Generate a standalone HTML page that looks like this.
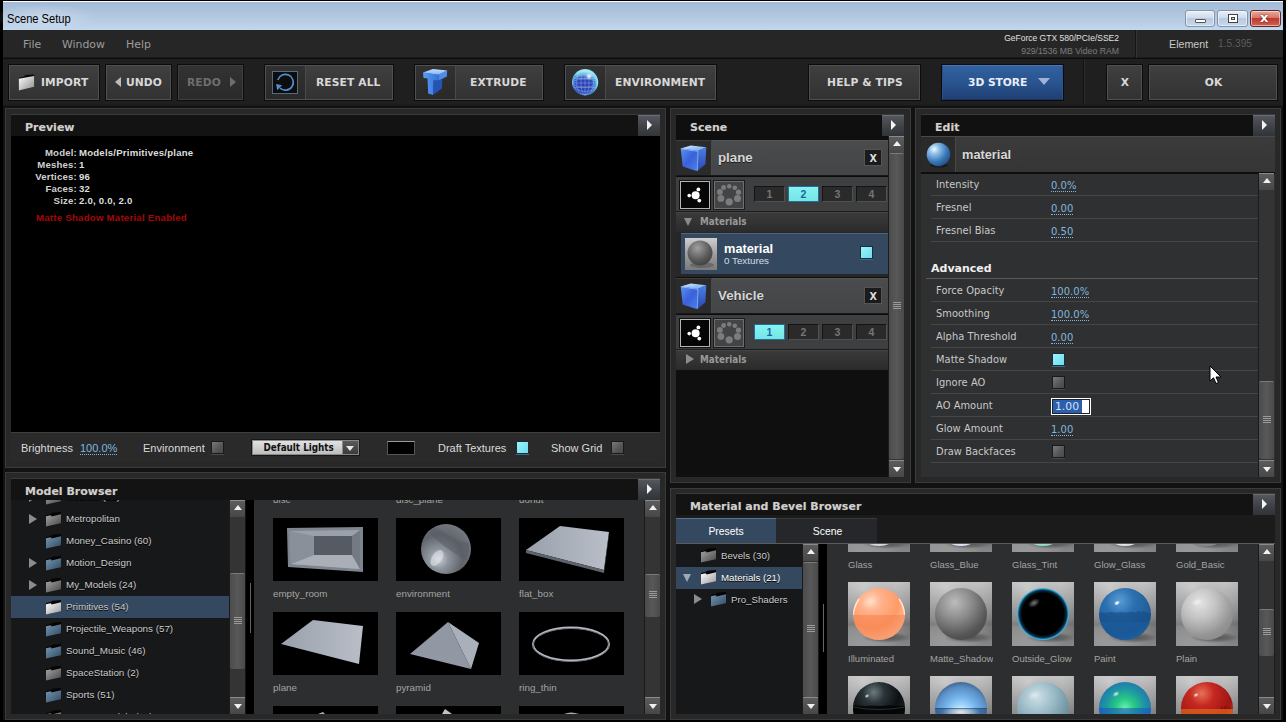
<!DOCTYPE html>
<html lang="en">
<head>
<meta charset="utf-8">
<title>Scene Setup</title>
<style>
*{box-sizing:border-box;margin:0;padding:0}
html,body{width:1286px;height:722px;overflow:hidden;background:#000}
body{position:relative;font-family:"Liberation Sans","DejaVu Sans",sans-serif;font-size:11px;color:#c4c4c4}
div,span,svg{position:absolute}
.dv{font-family:"DejaVu Sans","Liberation Sans",sans-serif}
.dc{font-family:"DejaVu Sans Condensed","DejaVu Sans","Liberation Sans",sans-serif}
.nw{white-space:nowrap}
#main{left:3px;top:1px;width:1280px;height:719px;background:#121212}
#title{left:3px;top:1px;width:1280px;height:29px;border-top:1px solid #fbfdff;background:linear-gradient(#a3bbd7,#b1c7e0 50%,#c3d7ed)}
#title .t{left:4px;top:9px;font-size:13px;color:#000;transform-origin:0 0;transform:scaleX(.855)}
.wb{top:10px;height:17px;border:1px solid #8494ab;border-radius:3px;background:linear-gradient(#e8eff8,#cfdced 45%,#b9cbe2 50%,#c9d8ea);box-shadow:0 0 0 1px rgba(255,255,255,.5) inset}
#menu{left:3px;top:30px;width:1280px;height:28px;background:#262626;border-bottom:1px solid #1a1a1a}
#menu span{top:8px;font-size:10.9px;color:#9c9c9c}
#tool{left:3px;top:58px;width:1280px;height:48px;background:#1f1f1f;border-top:1px solid #0d0d0d;border-bottom:1px solid #191919}
.btn{top:65px;height:35px;border:1px solid #505050;background:linear-gradient(#3f3f3f,#323232);box-shadow:0 0 0 1px #0c0c0c}
.btn .ic{left:0;top:0;bottom:0;width:40px;background:linear-gradient(#313131,#292929);border-right:1px solid #4a4a4a}
.btn .lb{top:0;height:33px;line-height:33px;font-family:"DejaVu Sans",sans-serif;font-weight:bold;font-size:10.7px;color:#d8d8d8;letter-spacing:.12px;white-space:nowrap}
.panel{background:#282828;border:1px solid #3b3b3b}
.inner{background:#131313;border-top:1px solid #393939;overflow:hidden}
.ph{font-family:"DejaVu Sans",sans-serif;font-weight:bold;font-size:11px;color:#cfcfcf;white-space:nowrap;text-shadow:0 0 1px rgba(230,200,150,.35)}
.ab{width:22px;background:linear-gradient(#53575d,#3c3f44 60%,#303338);border-top:1px solid #6a6e74}
.ab:after{content:"";position:absolute;left:9px;top:4px;border-left:5px solid #f4f4f4;border-top:5px solid transparent;border-bottom:5px solid transparent}
.sb{background:#343434;width:16px;border-left:1px solid #1b1b1b}
.sbb{left:0;width:15px;height:17px;background:linear-gradient(#5c5c5c,#474747);border-top:1px solid #8a8a8a}
.sbb.up:after{content:"";position:absolute;left:3.500px;top:4px;border-bottom:5px solid #f0f0f0;border-left:4px solid transparent;border-right:4px solid transparent}
.sbb.dn:after{content:"";position:absolute;left:3.500px;top:6px;border-top:5px solid #f0f0f0;border-left:4px solid transparent;border-right:4px solid transparent}
.sbt{left:0;width:15px;background:linear-gradient(90deg,#4c4c4c,#585858 50%,#4a4a4a);border-top:1px solid #7a7a7a;border-radius:2px}
.grip{left:3.500px;width:8px;height:7px;background:repeating-linear-gradient(#9a9a9a 0 1px,transparent 1px 2px)}
.cb{width:13px;height:13px;border:1px solid #1a1a1a;background:linear-gradient(135deg,#7a7a7a,#555 60%,#4a4a4a);box-shadow:0 1px 0 #4a4a4a}
.cb.on{background:linear-gradient(135deg,#9af4fb,#6fdcec);border-color:#1c2c3a;box-shadow:0 1px 0 #3a6a8a}
.tl{font-size:9.8px;color:#cbcbcb;white-space:nowrap;text-shadow:0 1px 0 #000}
.tri-r{width:0;height:0;border-left:8px solid #8c8c8c;border-top:5px solid transparent;border-bottom:5px solid transparent}
.tri-d{width:0;height:0;border-top:8px solid #8c8c8c;border-left:4.500px solid transparent;border-right:4.500px solid transparent}
.val{font-family:"DejaVu Sans",sans-serif;font-size:10px;color:#82b6dc;white-space:nowrap;border-bottom:1px dotted #82b6dc;line-height:11px;height:12px}
.el{font-family:"DejaVu Sans",sans-serif;font-size:9.9px;color:#c9c9c9;white-space:nowrap;letter-spacing:.05px}
.es{height:1px;background:#454545}
.glab{font-size:9.8px;color:#a4a4a4;white-space:nowrap}
.mlab{font-size:9.5px;width:63px;overflow:hidden}
.nb{width:31px;height:16px;top:10px;background:#2a2a2a;border:1px solid #141414;border-right-color:#505050;border-bottom-color:#505050;font-size:10.5px;font-weight:bold;color:#767676;text-align:center;line-height:14px}
.nb.on{background:linear-gradient(#86f4f0,#74e6e6);color:#1a64a2;border-color:#2a6a9a;font-weight:bold}
</style>
</head>
<body>
<div id="main"></div>
<div id="title"><div style="left:-14px;top:2px;width:110px;height:26px;background:radial-gradient(ellipse at center,rgba(255,255,255,.3),rgba(255,255,255,0) 70%)"></div><span class="t nw">Scene Setup</span></div>
<div class="wb" style="left:1185px;width:30px"><div style="left:9px;top:8px;width:11px;height:4px;background:#fff;border:1px solid #555;border-radius:1px"></div></div>
<div class="wb" style="left:1217px;width:31px"><div style="left:10px;top:3px;width:10px;height:9px;border:1px solid #444;background:#fff"></div><div style="left:13px;top:6px;width:4px;height:3px;border:1px solid #444;background:#c9d8ea"></div></div>
<div class="wb" style="left:1250px;width:31px;border-color:#5a2a2a;background:linear-gradient(#e9a99d,#d6766a 45%,#c2392b 50%,#d0624f)"><span class="dv" style="left:9px;top:-1px;font-weight:bold;font-size:13px;color:#fff;text-shadow:0 0 2px #400">x</span></div>
<div id="menu"><span class="dv" style="left:20px">File</span><span class="dv" style="left:59px">Window</span><span class="dv" style="left:123px">Help</span></div>
<span class="nw" style="right:167px;top:33px;font-size:8.5px;color:#e0e0e0">GeForce GTX 580/PCIe/SSE2</span>
<span class="nw" style="right:167px;top:46px;font-size:8.7px;color:#7d7d7d">929/1536 MB Video RAM</span>
<div style="left:1135px;top:30px;width:1px;height:28px;background:#151515"></div><div style="left:1136px;top:30px;width:1px;height:28px;background:#343434"></div>
<span class="nw" style="left:1169px;top:38px;font-size:10.7px;color:#c8c8c8">Element</span>
<span class="nw" style="left:1218px;top:38px;font-size:10.2px;color:#5c5c5c">1.5.395</span>
<div id="tool"></div>
<div style="left:1083px;top:59px;width:1px;height:46px;background:#111"></div><div style="left:1084px;top:59px;width:1px;height:46px;background:#2c2c2c"></div>

<div class="btn" style="left:9px;width:90px">
<svg style="left:8px;top:8px" width="17" height="17" viewBox="0 0 20 18" preserveAspectRatio="none"><defs><linearGradient id="imp" x1="0" y1="0" x2="1" y2="1"><stop offset="0" stop-color="#fff"/><stop offset="1" stop-color="#8d8d8d"/></linearGradient></defs><path d="M1 4 L7 3 L8.5 1 L19 0.5 L19 13 L1 17.5 Z" fill="#0a0a0a"/><path d="M1 5 L19 2.2 L19 13.5 L1 17.5 Z" fill="url(#imp)"/></svg>
<span class="lb" style="left:31px">IMPORT</span></div>
<div class="btn" style="left:106px;width:65px"><div style="left:8px;top:11px;border-right:6px solid #bbb;border-top:5px solid transparent;border-bottom:5px solid transparent"></div><span class="lb" style="left:19px">UNDO</span></div>
<div class="btn" style="left:178px;width:65px;border-color:#3f3f3f;background:linear-gradient(#323232,#2a2a2a)"><span class="lb" style="left:8px;color:#6e6e6e">REDO</span><div style="left:51px;top:11px;border-left:6px solid #6e6e6e;border-top:5px solid transparent;border-bottom:5px solid transparent"></div></div>
<div class="btn" style="left:265px;width:128px"><div class="ic"><div style="left:6px;top:5px;width:26px;height:23px;background:#0d0d0d;border:1px solid #566a80"></div>
<svg style="left:6px;top:5px" width="26" height="23" viewBox="0 0 26 23"><path d="M5.800 9.100 A7.900 7.900 0 1 1 8 17" fill="none" stroke="#4f8fcf" stroke-width="1.700"/><path d="M4.100 13.100 L10.100 14.200 L5.200 19.300 Z" fill="#4f8fcf"/></svg></div>
<span class="lb" style="left:50px">RESET ALL</span></div>
<div class="btn" style="left:415px;width:128px"><div class="ic">
<svg style="left:6px;top:1px" width="28" height="32" viewBox="0 0 28 32"><defs><linearGradient id="ex1" x1="0" y1="0" x2="1" y2="0"><stop offset="0" stop-color="#5a9cf4"/><stop offset="1" stop-color="#3573dc"/></linearGradient><linearGradient id="ex2" x1="0" y1="0" x2="0" y2="1"><stop offset="0" stop-color="#c4e0ff"/><stop offset="1" stop-color="#7cb6f8"/></linearGradient></defs>
<path d="M11.500 13.500 L16.400 13.500 L24.900 9.500 L20.400 12 L19.900 21.400 L11 28 Z" fill="#2453b4"/><path d="M16.400 7.700 L25.200 3.500 L24.900 9.500 L16.400 13.500 Z" fill="#4d8cec"/><path d="M1 5.500 L16.400 7.700 L16.400 13.500 L11.500 13.500 L11 28 L6.200 26.400 L5.500 11.500 L1.500 11 Z" fill="url(#ex1)"/><path d="M1 5.500 L11 2 L25.200 3.500 L16.400 7.700 Z" fill="url(#ex2)"/></svg></div>
<span class="lb" style="left:54px">EXTRUDE</span></div>
<div class="btn" style="left:565px;width:151px"><div class="ic">
<svg style="left:6px;top:3px" width="28" height="28" viewBox="0 0 28 28"><defs><radialGradient id="gl" cx=".45" cy=".6" r=".56"><stop offset="0" stop-color="#2a3cb4"/><stop offset=".55" stop-color="#2846b8"/><stop offset=".78" stop-color="#3f8ad4"/><stop offset=".92" stop-color="#74d2ea"/><stop offset="1" stop-color="#8adcee"/></radialGradient><radialGradient id="gl2" cx=".5" cy=".5" r=".5"><stop offset="0" stop-color="#fff"/><stop offset="1" stop-color="#fff" stop-opacity="0"/></radialGradient><linearGradient id="gl3" x1="0" y1="0" x2="0" y2="1"><stop offset="0" stop-color="#b8f0f8" stop-opacity=".85"/><stop offset="1" stop-color="#7fd8ee" stop-opacity="0"/></linearGradient></defs><circle cx="13.100" cy="13.200" r="13.100" fill="url(#gl)"/><g fill="none" stroke="#cfe6ff" stroke-width=".6" opacity=".55"><ellipse cx="13" cy="14" rx="12.500" ry="4"/><ellipse cx="13" cy="14" rx="12.800" ry="8.500"/><ellipse cx="13" cy="13.500" rx="4" ry="12.500"/><ellipse cx="13" cy="13.500" rx="8.500" ry="12.800"/><path d="M.5 14H25.700M13 1V26M2 9.500H24M2 18.500H24"/></g><ellipse cx="13" cy="6" rx="9.500" ry="5" fill="url(#gl3)"/><circle cx="17" cy="7.300" r="3.600" fill="url(#gl2)"/></svg></div>
<span class="lb" style="left:49px">ENVIRONMENT</span></div>
<div class="btn" style="left:809px;width:111px"><span class="lb" style="left:0;width:110px;text-align:center">HELP &amp; TIPS</span></div>
<div class="btn" style="left:942px;width:121px;top:65px;height:35px;border-color:#4a76b4 #2a5192 #1a3460 #2a5192;background:linear-gradient(#31619f,#29548f 50%,#1f4074)"><span class="lb" style="left:25px;top:0;color:#e9eef6;letter-spacing:-.05px">3D STORE</span><div style="left:95px;top:12px;border-top:7px solid #9fb4d4;border-left:6px solid transparent;border-right:6px solid transparent"></div></div>
<div class="btn" style="left:1107px;width:35px"><span class="lb" style="left:0;width:34px;text-align:center">X</span></div>
<div class="btn" style="left:1149px;width:128px"><span class="lb" style="left:0;width:127px;text-align:center">OK</span></div>

<div class="panel" style="left:5px;top:108px;width:661px;height:360px"></div>
<div class="inner" style="left:11px;top:114px;width:649px;height:348px">
 <span class="ph" style="left:14px;top:6px">Preview</span>
 <div class="ab" style="left:627px;top:0;height:22px"></div>
 <div style="left:0;top:21px;width:649px;height:296px;background:#000"></div>
 <div style="left:0;top:317px;width:649px;height:31px;background:#2a2a2a;border-top:1px solid #3e3e3e"></div>
</div>

<span class="nw" style="right:1209px;top:147px;font-weight:bold;font-size:9.6px;color:#d0d0d0;letter-spacing:.2px">Model:</span><span class="nw" style="left:79px;top:147px;font-weight:bold;font-size:9.6px;color:#dedede;letter-spacing:.22px">Models/Primitives/plane</span>
<span class="nw" style="right:1209px;top:159px;font-weight:bold;font-size:9.6px;color:#d0d0d0;letter-spacing:.2px">Meshes:</span><span class="nw" style="left:79px;top:159px;font-weight:bold;font-size:9.6px;color:#dedede;letter-spacing:.22px">1</span>
<span class="nw" style="right:1209px;top:171px;font-weight:bold;font-size:9.6px;color:#d0d0d0;letter-spacing:.2px">Vertices:</span><span class="nw" style="left:79px;top:171px;font-weight:bold;font-size:9.6px;color:#dedede;letter-spacing:.22px">96</span>
<span class="nw" style="right:1209px;top:183px;font-weight:bold;font-size:9.6px;color:#d0d0d0;letter-spacing:.2px">Faces:</span><span class="nw" style="left:79px;top:183px;font-weight:bold;font-size:9.6px;color:#dedede;letter-spacing:.22px">32</span>
<span class="nw" style="right:1209px;top:195px;font-weight:bold;font-size:9.6px;color:#d0d0d0;letter-spacing:.2px">Size:</span><span class="nw" style="left:79px;top:195px;font-weight:bold;font-size:9.6px;color:#dedede;letter-spacing:.22px">2.0, 0.0, 2.0</span>
<span class="nw" style="left:36px;top:212px;font-weight:bold;font-size:9.6px;color:#a80606;letter-spacing:.26px">Matte Shadow Material Enabled</span>
<span class="nw" style="left:21px;top:442px;font-size:11px;color:#dadada">Brightness</span>
<span class="nw" style="left:80px;top:443px;font-size:11px;color:#7db6e0;border-bottom:1px dotted #7db6e0;line-height:11px;height:12px">100.0%</span>
<span class="nw" style="left:143px;top:442px;font-size:11px;color:#dadada">Environment</span>
<div class="cb" style="left:211px;top:441px"></div>
<div style="left:252px;top:440px;width:107px;height:15px;background:linear-gradient(#e2e2e2,#bdbdbd);border:1px solid #8a8a8a;border-right:0;box-shadow:0 0 0 1px #171717"></div>
<span class="dc nw" style="left:263.500px;top:441.500px;font-weight:bold;font-size:9.8px;color:#111">Default Lights</span>
<div style="left:342px;top:440px;width:17px;height:15px;background:linear-gradient(#5a5a5a,#3b3b3b);border:1px solid #888"></div>
<div style="left:346px;top:446px;border-top:5px solid #e8e8e8;border-left:4px solid transparent;border-right:4px solid transparent"></div>
<div style="left:387px;top:441px;width:28px;height:14px;background:#000;border:1px solid #555;border-top-color:#999"></div>
<span class="nw" style="left:438px;top:442px;font-size:11px;color:#dadada">Draft Textures</span>
<div class="cb on" style="left:516px;top:441px"></div>
<span class="nw" style="left:551px;top:442px;font-size:11px;color:#dadada">Show Grid</span>
<div class="cb" style="left:611px;top:441px"></div>

<div class="panel" style="left:5px;top:472px;width:661px;height:248px"></div>
<div class="inner" style="left:11px;top:478px;width:649px;height:236px">
 <span class="ph" style="left:14px;top:6px">Model Browser</span>
 <div class="ab" style="left:627px;top:0;height:21px"></div>
 <div style="left:0;top:21px;width:219px;height:215px;background:#17181a"></div>
 <div style="left:235px;top:21px;width:8px;height:215px;background:#000"></div>
 <div style="left:239px;top:104px;width:1px;height:50px;background:#666"></div>
 <div style="left:243px;top:21px;width:390px;height:215px;background:#2d2e2f"></div>
</div>

<div style="left:11px;top:500px;width:219px;height:214px;overflow:hidden">
<div class="tri-r" style="left:18px;top:-8px"></div>
<svg style="left:34px;top:-10px" width="17" height="15" viewBox="0 0 17 15"><defs><linearGradient id="fgm0" x1="0" y1="0" x2="1" y2="1"><stop offset="0" stop-color="#a4a4a4"/><stop offset="1" stop-color="#464646"/></linearGradient></defs><path d="M1 3 L6 1.800 L7 0.700 L16 0 L16 11 L1 14.500 Z" fill="#050505"/><path d="M1 4.300 L5.600 3.300 L6.800 4.500 L16 2.200 L16 11.200 L1 14.500 Z" fill="url(#fgm0)"/></svg>
<span class="tl" style="left:55px;top:-9px">Medical (12)</span>
<div class="tri-r" style="left:18px;top:14px"></div>
<svg style="left:34px;top:12px" width="17" height="15" viewBox="0 0 17 15"><defs><linearGradient id="fgm1" x1="0" y1="0" x2="1" y2="1"><stop offset="0" stop-color="#a4a4a4"/><stop offset="1" stop-color="#464646"/></linearGradient></defs><path d="M1 3 L6 1.800 L7 0.700 L16 0 L16 11 L1 14.500 Z" fill="#050505"/><path d="M1 4.300 L5.600 3.300 L6.800 4.500 L16 2.200 L16 11.200 L1 14.500 Z" fill="url(#fgm1)"/></svg>
<span class="tl" style="left:55px;top:13px">Metropolitan</span>
<svg style="left:34px;top:34px" width="17" height="15" viewBox="0 0 17 15"><defs><linearGradient id="fgm2" x1="0" y1="0" x2="1" y2="1"><stop offset="0" stop-color="#7796b0"/><stop offset="1" stop-color="#2f4a63"/></linearGradient></defs><path d="M1 3 L6 1.800 L7 0.700 L16 0 L16 11 L1 14.500 Z" fill="#050505"/><path d="M1 4.300 L5.600 3.300 L6.800 4.500 L16 2.200 L16 11.200 L1 14.500 Z" fill="url(#fgm2)"/></svg>
<span class="tl" style="left:55px;top:35px">Money_Casino (60)</span>
<div class="tri-r" style="left:18px;top:58px"></div>
<svg style="left:34px;top:56px" width="17" height="15" viewBox="0 0 17 15"><defs><linearGradient id="fgm3" x1="0" y1="0" x2="1" y2="1"><stop offset="0" stop-color="#7796b0"/><stop offset="1" stop-color="#2f4a63"/></linearGradient></defs><path d="M1 3 L6 1.800 L7 0.700 L16 0 L16 11 L1 14.500 Z" fill="#050505"/><path d="M1 4.300 L5.600 3.300 L6.800 4.500 L16 2.200 L16 11.200 L1 14.500 Z" fill="url(#fgm3)"/></svg>
<span class="tl" style="left:55px;top:57px">Motion_Design</span>
<div class="tri-r" style="left:18px;top:80px"></div>
<svg style="left:34px;top:78px" width="17" height="15" viewBox="0 0 17 15"><defs><linearGradient id="fgm4" x1="0" y1="0" x2="1" y2="1"><stop offset="0" stop-color="#a4a4a4"/><stop offset="1" stop-color="#464646"/></linearGradient></defs><path d="M1 3 L6 1.800 L7 0.700 L16 0 L16 11 L1 14.500 Z" fill="#050505"/><path d="M1 4.300 L5.600 3.300 L6.800 4.500 L16 2.200 L16 11.200 L1 14.500 Z" fill="url(#fgm4)"/></svg>
<span class="tl" style="left:55px;top:79px">My_Models (24)</span>
<div style="left:0;top:96px;width:219px;height:22px;background:#34495f"></div>
<svg style="left:34px;top:100px" width="17" height="15" viewBox="0 0 17 15"><defs><linearGradient id="fgm5" x1="0" y1="0" x2="1" y2="1"><stop offset="0" stop-color="#ffffff"/><stop offset="1" stop-color="#9a9a9a"/></linearGradient></defs><path d="M1 3 L6 1.800 L7 0.700 L16 0 L16 11 L1 14.500 Z" fill="#050505"/><path d="M1 4.300 L5.600 3.300 L6.800 4.500 L16 2.200 L16 11.200 L1 14.500 Z" fill="url(#fgm5)"/></svg>
<span class="tl" style="left:55px;top:101px">Primitives (54)</span>
<svg style="left:34px;top:122px" width="17" height="15" viewBox="0 0 17 15"><defs><linearGradient id="fgm6" x1="0" y1="0" x2="1" y2="1"><stop offset="0" stop-color="#7796b0"/><stop offset="1" stop-color="#2f4a63"/></linearGradient></defs><path d="M1 3 L6 1.800 L7 0.700 L16 0 L16 11 L1 14.500 Z" fill="#050505"/><path d="M1 4.300 L5.600 3.300 L6.800 4.500 L16 2.200 L16 11.200 L1 14.500 Z" fill="url(#fgm6)"/></svg>
<span class="tl" style="left:55px;top:123px">Projectile_Weapons (57)</span>
<svg style="left:34px;top:144px" width="17" height="15" viewBox="0 0 17 15"><defs><linearGradient id="fgm7" x1="0" y1="0" x2="1" y2="1"><stop offset="0" stop-color="#7796b0"/><stop offset="1" stop-color="#2f4a63"/></linearGradient></defs><path d="M1 3 L6 1.800 L7 0.700 L16 0 L16 11 L1 14.500 Z" fill="#050505"/><path d="M1 4.300 L5.600 3.300 L6.800 4.500 L16 2.200 L16 11.200 L1 14.500 Z" fill="url(#fgm7)"/></svg>
<span class="tl" style="left:55px;top:145px">Sound_Music (46)</span>
<svg style="left:34px;top:166px" width="17" height="15" viewBox="0 0 17 15"><defs><linearGradient id="fgm8" x1="0" y1="0" x2="1" y2="1"><stop offset="0" stop-color="#a4a4a4"/><stop offset="1" stop-color="#464646"/></linearGradient></defs><path d="M1 3 L6 1.800 L7 0.700 L16 0 L16 11 L1 14.500 Z" fill="#050505"/><path d="M1 4.300 L5.600 3.300 L6.800 4.500 L16 2.200 L16 11.200 L1 14.500 Z" fill="url(#fgm8)"/></svg>
<span class="tl" style="left:55px;top:167px">SpaceStation (2)</span>
<svg style="left:34px;top:188px" width="17" height="15" viewBox="0 0 17 15"><defs><linearGradient id="fgm9" x1="0" y1="0" x2="1" y2="1"><stop offset="0" stop-color="#7796b0"/><stop offset="1" stop-color="#2f4a63"/></linearGradient></defs><path d="M1 3 L6 1.800 L7 0.700 L16 0 L16 11 L1 14.500 Z" fill="#050505"/><path d="M1 4.300 L5.600 3.300 L6.800 4.500 L16 2.200 L16 11.200 L1 14.500 Z" fill="url(#fgm9)"/></svg>
<span class="tl" style="left:55px;top:189px">Sports (51)</span>
<svg style="left:34px;top:210px" width="17" height="15" viewBox="0 0 17 15"><defs><linearGradient id="fgm10" x1="0" y1="0" x2="1" y2="1"><stop offset="0" stop-color="#a4a4a4"/><stop offset="1" stop-color="#464646"/></linearGradient></defs><path d="M1 3 L6 1.800 L7 0.700 L16 0 L16 11 L1 14.500 Z" fill="#050505"/><path d="M1 4.300 L5.600 3.300 L6.800 4.500 L16 2.200 L16 11.200 L1 14.500 Z" fill="url(#fgm10)"/></svg>
<span class="tl" style="left:55px;top:211px">Starter_Models (24)</span>
</div>
<div class="sb" style="left:229px;top:500px;height:214px"><div class="sbb up" style="top:0"></div><div class="sbt" style="top:73px;height:96px"></div><div class="grip" style="top:117px"></div><div class="sbb dn" style="top:197px"></div></div>
<div class="sb" style="left:644px;top:500px;height:214px"><div class="sbb up" style="top:0"></div><div class="sbt" style="top:74px;height:43px"></div><div class="grip" style="top:91px"></div><div class="sbb dn" style="top:197px"></div></div>
<div style="left:254px;top:500px;width:390px;height:214px;overflow:hidden">
<svg width="0" height="0"><defs>
<linearGradient id="mg1" x1="0" y1="0" x2="1" y2="1"><stop offset="0" stop-color="#aeb4bd"/><stop offset="1" stop-color="#8f96a1"/></linearGradient>
<linearGradient id="mg2" x1="0" y1="0" x2="1" y2="0"><stop offset="0" stop-color="#9aa1ac"/><stop offset="1" stop-color="#b9bec7"/></linearGradient>
<radialGradient id="msp" cx=".35" cy=".7" r=".8"><stop offset="0" stop-color="#d0d4da"/><stop offset=".25" stop-color="#8e949c"/><stop offset=".6" stop-color="#5f646b"/><stop offset="1" stop-color="#787d85"/></radialGradient>
</defs></svg>
<span class="glab" style="left:19px;top:-6px">disc</span>
<span class="glab" style="left:142px;top:-6px">disc_plane</span>
<span class="glab" style="left:265px;top:-6px">donut</span>
<svg style="left:19px;top:18px" width="105" height="63" viewBox="0 0 105 63"><rect width="105" height="63" fill="#000"/><path d="M14 10 L90 9 L90 54 L15 49 Z" fill="#7f858e"/><path d="M17 13 L87 12 L87 51 L18 46 Z" fill="#9ba1ab"/><path d="M41 18 L79 18 L79 37 L41 37 Z" fill="#565b63"/><path d="M18 46 L41 37 L79 37 L87 51 Z" fill="#a9aeb7"/><path d="M17 13 L41 18 L41 37 L18 46 Z" fill="#8a909a"/><path d="M87 12 L79 18 L79 37 L87 51 Z" fill="#747a83"/></svg>
<span class="glab" style="left:19px;top:88px">empty_room</span>
<svg style="left:142px;top:18px" width="105" height="63" viewBox="0 0 105 63"><rect width="105" height="63" fill="#000"/><circle cx="50" cy="31" r="25" fill="url(#msp)"/><path d="M32 14 Q48 30 70 42 Q74 34 73 25 Q56 22 40 9 Z" fill="#585d64" opacity=".55"/><ellipse cx="41" cy="40" rx="5" ry="9" fill="#e6e9ee" opacity=".55" transform="rotate(35 41 40)"/></svg>
<span class="glab" style="left:142px;top:88px">environment</span>
<svg style="left:265px;top:18px" width="105" height="63" viewBox="0 0 105 63"><rect width="105" height="63" fill="#000"/><path d="M7 32 L41 8 L90 14 L85 52 Z" fill="url(#mg2)"/><path d="M7 32 L85 52 L85 55 L7 35 Z" fill="#5e636b"/><path d="M85 52 L90 14 L90 17 L85 55 Z" fill="#4a4f56"/></svg>
<span class="glab" style="left:265px;top:88px">flat_box</span>
<svg style="left:19px;top:112px" width="105" height="63" viewBox="0 0 105 63"><rect width="105" height="63" fill="#000"/><path d="M8 32 L40 8 L90 14 L86 52 Z" fill="url(#mg2)"/></svg>
<span class="glab" style="left:19px;top:182px">plane</span>
<svg style="left:142px;top:112px" width="105" height="63" viewBox="0 0 105 63"><rect width="105" height="63" fill="#000"/><path d="M14 42 L52 10 L75 57 Z" fill="#9198a3"/><path d="M52 10 L83 31 L75 57 Z" fill="#aab0ba"/></svg>
<span class="glab" style="left:142px;top:182px">pyramid</span>
<svg style="left:265px;top:112px" width="105" height="63" viewBox="0 0 105 63"><rect width="105" height="63" fill="#000"/><ellipse cx="52" cy="32" rx="38" ry="16.500" fill="none" stroke="#b8bcc4" stroke-width="2"/><ellipse cx="52" cy="33" rx="38" ry="16.500" fill="none" stroke="#70757d" stroke-width="1"/></svg>
<span class="glab" style="left:265px;top:182px">ring_thin</span>
<svg style="left:19px;top:206px" width="105" height="63" viewBox="0 0 105 63"><rect width="105" height="63" fill="#000"/><path d="M45 8 L50 6 L52 8 Z" fill="#aaa"/></svg>
<svg style="left:142px;top:206px" width="105" height="63" viewBox="0 0 105 63"><rect width="105" height="63" fill="#000"/><path d="M46 8 L49 3 L56 8 Z" fill="#c0c4ca"/></svg>
<svg style="left:265px;top:206px" width="105" height="63" viewBox="0 0 105 63"><rect width="105" height="63" fill="#000"/><path d="M45 8 Q52 5 60 8 Z" fill="#aaa"/></svg>
</div>
<div class="panel" style="left:670px;top:108px;width:241px;height:375px"></div>
<div class="inner" style="left:676px;top:114px;width:228px;height:363px;background:#0f0f0f">
 <span class="ph" style="left:14px;top:6px">Scene</span>
 <div class="ab" style="left:206px;top:0;height:21px"></div>
</div>
<div style="left:676px;top:140px;width:212px;height:36px;background:linear-gradient(#4a4b4d,#444546);border-top:1px solid #545556;border-bottom:1px solid #181818"></div>
<div style="left:676px;top:140px;width:36px;height:35px;background:#2b2b2b;border-top:1px solid #3d3d3d;border-right:1px solid #4a4a4a"></div>
<svg style="left:680px;top:143px" width="28" height="30" viewBox="0 0 28 30"><defs>
<linearGradient id="cupa" x1="0" y1="0" x2="1" y2="1"><stop offset="0" stop-color="#e8f4ff"/><stop offset=".4" stop-color="#a4ccff"/><stop offset="1" stop-color="#6a9ef0"/></linearGradient>
<linearGradient id="cupb" x1="0" y1="0" x2="1" y2="1"><stop offset="0" stop-color="#5a92ee"/><stop offset=".5" stop-color="#3b60dc"/><stop offset="1" stop-color="#4a84e6"/></linearGradient>
<linearGradient id="cupc" x1="0" y1="0" x2="0" y2="1"><stop offset="0" stop-color="#4a80e4"/><stop offset="1" stop-color="#2a46b4"/></linearGradient></defs>
<path d="M.7 5.500 L10.900 2.600 L26.300 4.300 L17.900 8.100 Z" fill="url(#cupa)"/><path d="M.7 5.500 L17.900 8.100 L17.300 28.200 L2.700 23.500 Z" fill="url(#cupb)"/><path d="M17.900 8.100 L26.300 4.300 L25.400 21.200 L17.300 28.200 Z" fill="url(#cupc)"/><path d="M.9 5.800 L17.900 8.300 L17.400 27.500" fill="none" stroke="#9fd0ff" stroke-width=".9" opacity=".75"/></svg>
<span class="nw" style="left:718px;top:150px;font-weight:bold;font-size:13.3px;color:#d6d6d6;text-shadow:0 1px 0 #1a1a1a">plane</span>
<div style="left:864px;top:149px;width:18px;height:17px;background:#1b1b1b;border:1px solid #555"></div><span class="dv" style="left:869.500px;top:153px;font-weight:bold;font-size:9.6px;color:#dcdcdc">X</span>
<div style="left:676px;top:176px;width:212px;height:36px;background:#3e3f41;border-top:1px solid #0c0c0c;border-bottom:1px solid #1c1c1c"></div>
<div style="left:680px;top:181px;width:30px;height:28px;background:#060606;border:1px solid #b5b5b5;box-shadow:0 0 0 1px #111"></div>
<svg style="left:683px;top:183px" width="25" height="23" viewBox="0 0 25 23"><g fill="#fff"><circle cx="12.600" cy="12.300" r="4"/><circle cx="6.200" cy="12.600" r="1.800"/><circle cx="15.400" cy="6.400" r="1.900"/><circle cx="16.300" cy="17.600" r="1.900"/></g></svg>
<div style="left:714px;top:181px;width:30px;height:28px;background:#424446;border:1px solid #6c6e70;box-shadow:0 0 0 1px #1c1c1c"></div>
<svg style="left:716px;top:182px" width="27" height="25" viewBox="0 0 27 25"><g fill="#7c7c7c"><circle cx="13.200" cy="19.800" r="3.600"/><circle cx="4.900" cy="16.400" r="3.400"/><circle cx="3.900" cy="9.900" r="2.900"/><circle cx="7.600" cy="5.500" r="2.400"/><circle cx="13.200" cy="4.300" r="2.200"/><circle cx="18.800" cy="5.700" r="2.300"/><circle cx="22.500" cy="10.200" r="2.600"/><circle cx="21.500" cy="16.400" r="3.500"/></g></svg>
<div class="nb" style="left:754px;top:186px">1</div>
<div class="nb on" style="left:788px;top:186px">2</div>
<div class="nb" style="left:822px;top:186px">3</div>
<div class="nb" style="left:856px;top:186px">4</div>
<div style="left:676px;top:212px;width:212px;height:20px;background:linear-gradient(#3a3a3b,#2b2b2c);border-top:1px solid #454545"></div>
<div class="tri-d" style="left:684px;top:218px"></div>
<span class="dc nw" style="left:700px;top:216px;font-weight:bold;font-size:9.8px;color:#9a9a9a">Materials</span>
<div style="left:676px;top:232px;width:212px;height:45px;background:#262626"></div>
<div style="left:681px;top:233px;width:207px;height:41px;background:#34495f;border-top:1px solid #4d6580"></div>
<svg style="left:685px;top:238px" width="32" height="32" viewBox="0 0 32 32"><defs><linearGradient id="mtb" x1="0" y1="0" x2="0" y2="1"><stop offset="0" stop-color="#cfcfcf"/><stop offset=".55" stop-color="#9a9a9a"/><stop offset="1" stop-color="#7a7a7a"/></linearGradient><radialGradient id="mts" cx=".4" cy=".3" r=".8"><stop offset="0" stop-color="#a0a0a0"/><stop offset=".6" stop-color="#5a5a5a"/><stop offset="1" stop-color="#3a3a3a"/></radialGradient></defs><rect width="32" height="32" fill="url(#mtb)"/><ellipse cx="17" cy="27" rx="12" ry="3" fill="#555" opacity=".6"/><circle cx="15" cy="15" r="12.500" fill="url(#mts)"/></svg>
<span class="nw" style="left:724px;top:241px;font-weight:bold;font-size:12.8px;color:#fff">material</span>
<span class="nw" style="left:724px;top:255px;font-size:9.8px;color:#d5dbe2">0 Textures</span>
<div class="cb on" style="left:860px;top:246px"></div>

<div style="left:676px;top:278px;width:212px;height:36px;background:linear-gradient(#4a4b4d,#444546);border-top:1px solid #545556;border-bottom:1px solid #181818"></div>
<div style="left:676px;top:278px;width:36px;height:35px;background:#2b2b2b;border-top:1px solid #3d3d3d;border-right:1px solid #4a4a4a"></div>
<svg style="left:680px;top:281px" width="28" height="30" viewBox="0 0 28 30"><defs>
<linearGradient id="cuva" x1="0" y1="0" x2="1" y2="1"><stop offset="0" stop-color="#e8f4ff"/><stop offset=".4" stop-color="#a4ccff"/><stop offset="1" stop-color="#6a9ef0"/></linearGradient>
<linearGradient id="cuvb" x1="0" y1="0" x2="1" y2="1"><stop offset="0" stop-color="#5a92ee"/><stop offset=".5" stop-color="#3b60dc"/><stop offset="1" stop-color="#4a84e6"/></linearGradient>
<linearGradient id="cuvc" x1="0" y1="0" x2="0" y2="1"><stop offset="0" stop-color="#4a80e4"/><stop offset="1" stop-color="#2a46b4"/></linearGradient></defs>
<path d="M.7 5.500 L10.900 2.600 L26.300 4.300 L17.900 8.100 Z" fill="url(#cuva)"/><path d="M.7 5.500 L17.900 8.100 L17.300 28.200 L2.700 23.500 Z" fill="url(#cuvb)"/><path d="M17.900 8.100 L26.300 4.300 L25.400 21.200 L17.300 28.200 Z" fill="url(#cuvc)"/><path d="M.9 5.800 L17.900 8.300 L17.400 27.500" fill="none" stroke="#9fd0ff" stroke-width=".9" opacity=".75"/></svg>
<span class="nw" style="left:718px;top:288px;font-weight:bold;font-size:13.3px;color:#d6d6d6;text-shadow:0 1px 0 #1a1a1a">Vehicle</span>
<div style="left:864px;top:287px;width:18px;height:17px;background:#1b1b1b;border:1px solid #555"></div><span class="dv" style="left:869.500px;top:291px;font-weight:bold;font-size:9.6px;color:#dcdcdc">X</span>
<div style="left:676px;top:314px;width:212px;height:36px;background:#3e3f41;border-top:1px solid #0c0c0c;border-bottom:1px solid #1c1c1c"></div>
<div style="left:680px;top:319px;width:30px;height:28px;background:#060606;border:1px solid #b5b5b5;box-shadow:0 0 0 1px #111"></div>
<svg style="left:683px;top:321px" width="25" height="23" viewBox="0 0 25 23"><g fill="#fff"><circle cx="12.600" cy="12.300" r="4"/><circle cx="6.200" cy="12.600" r="1.800"/><circle cx="15.400" cy="6.400" r="1.900"/><circle cx="16.300" cy="17.600" r="1.900"/></g></svg>
<div style="left:714px;top:319px;width:30px;height:28px;background:#424446;border:1px solid #6c6e70;box-shadow:0 0 0 1px #1c1c1c"></div>
<svg style="left:716px;top:320px" width="27" height="25" viewBox="0 0 27 25"><g fill="#7c7c7c"><circle cx="13.200" cy="19.800" r="3.600"/><circle cx="4.900" cy="16.400" r="3.400"/><circle cx="3.900" cy="9.900" r="2.900"/><circle cx="7.600" cy="5.500" r="2.400"/><circle cx="13.200" cy="4.300" r="2.200"/><circle cx="18.800" cy="5.700" r="2.300"/><circle cx="22.500" cy="10.200" r="2.600"/><circle cx="21.500" cy="16.400" r="3.500"/></g></svg>
<div class="nb on" style="left:754px;top:324px">1</div>
<div class="nb" style="left:788px;top:324px">2</div>
<div class="nb" style="left:822px;top:324px">3</div>
<div class="nb" style="left:856px;top:324px">4</div>
<div style="left:676px;top:350px;width:212px;height:20px;background:linear-gradient(#3a3a3b,#2b2b2c);border-top:1px solid #454545"></div>
<div class="tri-r" style="left:686px;top:354px"></div>
<span class="dc nw" style="left:700px;top:354px;font-weight:bold;font-size:9.8px;color:#9a9a9a">Materials</span>
<div class="sb" style="left:888px;top:136px;height:341px"><div class="sbb up" style="top:0"></div><div class="sbt" style="top:17px;height:306px"></div><div class="grip" style="top:166px"></div><div class="sbb dn" style="top:324px"></div></div>
<div class="panel" style="left:915px;top:108px;width:366px;height:375px"></div>
<div class="inner" style="left:921px;top:114px;width:354px;height:363px;background:#2f3031">
 <div style="left:0;top:0;width:354px;height:21px;background:#111"></div>
 <span class="ph" style="left:14px;top:6px">Edit</span>
 <div class="ab" style="left:332px;top:0;height:21px;width:22px"></div>
 <div style="left:0;top:21px;width:354px;height:38px;background:linear-gradient(#3b3b3c,#353536);border-top:1px solid #4a4a4a;border-bottom:2px solid #0e0e0e"></div>
 <div style="left:0;top:22px;width:35px;height:35px;background:#2a2a2a;border-right:1px solid #484848"></div>
 <svg style="left:5px;top:27px" width="25" height="26" viewBox="0 0 25 26"><defs><radialGradient id="bs" cx=".32" cy=".28" r=".85"><stop offset="0" stop-color="#f2faff"/><stop offset=".25" stop-color="#8cc0ea"/><stop offset=".62" stop-color="#3a78b8"/><stop offset="1" stop-color="#1c4478"/></radialGradient></defs><ellipse cx="13" cy="23.500" rx="9" ry="2" fill="#111" opacity=".6"/><circle cx="12.500" cy="12.500" r="11.800" fill="url(#bs)"/></svg>
 <span class="nw" style="left:41px;top:32px;font-weight:bold;font-size:12.8px;color:#d8d8d8;text-shadow:0 1px 0 #1a1a1a">material</span>
</div>
<span class="el" style="left:936px;top:179px">Intensity</span>
<span class="val" style="left:1051px;top:180px">0.0%</span>
<div class="es" style="left:931px;top:195px;width:327px"></div>
<span class="el" style="left:936px;top:202px">Fresnel</span>
<span class="val" style="left:1051px;top:203px">0.00</span>
<div class="es" style="left:931px;top:218px;width:327px"></div>
<span class="el" style="left:936px;top:225px">Fresnel Bias</span>
<span class="val" style="left:1051px;top:226px">0.50</span>
<div class="es" style="left:931px;top:241px;width:327px"></div>
<span class="dv nw" style="left:931px;top:262px;font-weight:bold;font-size:11px;color:#f0f0f0">Advanced</span><div class="es" style="left:926px;top:278px;width:332px;background:#5a5a5a"></div>
<span class="el" style="left:936px;top:285px">Force Opacity</span>
<span class="val" style="left:1051px;top:286px">100.0%</span>
<div class="es" style="left:931px;top:301px;width:327px"></div>
<span class="el" style="left:936px;top:308px">Smoothing</span>
<span class="val" style="left:1051px;top:309px">100.0%</span>
<div class="es" style="left:931px;top:324px;width:327px"></div>
<span class="el" style="left:936px;top:331px">Alpha Threshold</span>
<span class="val" style="left:1051px;top:332px">0.00</span>
<div class="es" style="left:931px;top:347px;width:327px"></div>
<span class="el" style="left:936px;top:354px">Matte Shadow</span>
<div class="cb on" style="left:1052px;top:353px"></div>
<div class="es" style="left:931px;top:370px;width:327px"></div>
<span class="el" style="left:936px;top:377px">Ignore AO</span>
<div class="cb" style="left:1052px;top:376px"></div>
<div class="es" style="left:931px;top:393px;width:327px"></div>
<span class="el" style="left:936px;top:400px">AO Amount</span>
<div style="left:1051px;top:398px;width:40px;height:17px;background:#fff;border:1px solid #fff;box-shadow:0 0 0 1px #222 inset"></div><div style="left:1053px;top:400px;width:29px;height:13px;background:#2b5fae"></div><span class="dv nw" style="left:1055px;top:400px;font-size:10.8px;color:#cfe0f5">1.00</span>
<div class="es" style="left:931px;top:416px;width:327px"></div>
<span class="el" style="left:936px;top:423px">Glow Amount</span>
<span class="val" style="left:1051px;top:424px">1.00</span>
<div class="es" style="left:931px;top:439px;width:327px"></div>
<span class="el" style="left:936px;top:446px">Draw Backfaces</span>
<div class="cb" style="left:1052px;top:445px"></div>
<div class="es" style="left:931px;top:462px;width:327px"></div>
<div class="sb" style="left:1258px;top:173px;height:304px"><div class="sbb up" style="top:0"></div><div class="sbt" style="top:208px;height:78px"></div><div class="grip" style="top:243px"></div><div class="sbb dn" style="top:287px"></div></div>
<svg style="left:1209px;top:365px" width="14" height="20" viewBox="0 0 14 20"><path d="M1 1 L1 16 L4.500 12.800 L7 18.500 L9.500 17.500 L7 12 L12 12 Z" fill="#fff" stroke="#000" stroke-width="1"/></svg>
<div class="panel" style="left:670px;top:488px;width:611px;height:232px"></div>
<div class="inner" style="left:676px;top:493px;width:599px;height:221px;background:#1b1b1b">
 <div style="left:0;top:0;width:599px;height:21px;background:#131313"></div>
 <span class="ph" style="left:14px;top:6px">Material and Bevel Browser</span>
 <div class="ab" style="left:577px;top:0;height:21px;width:22px"></div>
 <div style="left:0;top:24px;width:100px;height:25px;background:#34495f;border-top:1px solid #587491"></div>
 <div style="left:100px;top:24px;width:101px;height:25px;background:#25272a;border-top:1px solid #3a3a3a"></div>
 <span class="nw" style="left:0;top:32px;width:100px;text-align:center;font-size:10.4px;color:#fff">Presets</span>
 <span class="nw" style="left:101px;top:32px;width:101px;text-align:center;font-size:10.4px;color:#fff">Scene</span>
 <div style="left:0;top:49px;width:599px;height:1px;background:#5a5a5a"></div>
 <div style="left:0;top:50px;width:126px;height:171px;background:#17181a"></div>
 <div style="left:143px;top:50px;width:8px;height:171px;background:#000"></div>
 <div style="left:147px;top:110px;width:1px;height:48px;background:#666"></div>
 <div style="left:151px;top:50px;width:431px;height:171px;background:#2d2e2f"></div>
</div>
<div style="left:676px;top:544px;width:127px;height:170px;overflow:hidden">
<svg style="left:24px;top:4px" width="17" height="15" viewBox="0 0 17 15"><defs><linearGradient id="fgb1" x1="0" y1="0" x2="1" y2="1"><stop offset="0" stop-color="#a4a4a4"/><stop offset="1" stop-color="#464646"/></linearGradient></defs><path d="M1 3 L6 1.800 L7 0.700 L16 0 L16 11 L1 14.500 Z" fill="#050505"/><path d="M1 4.300 L5.600 3.300 L6.800 4.500 L16 2.200 L16 11.200 L1 14.500 Z" fill="url(#fgb1)"/></svg><span class="tl" style="left:45px;top:6px;font-size:9.700px">Bevels (30)</span>
<div style="left:0;top:23px;width:126px;height:22px;background:#34495f"></div><div class="tri-d" style="left:7px;top:30px;border-top-color:#9ab"></div><svg style="left:24px;top:26px" width="17" height="15" viewBox="0 0 17 15"><defs><linearGradient id="fgb2" x1="0" y1="0" x2="1" y2="1"><stop offset="0" stop-color="#ffffff"/><stop offset="1" stop-color="#9a9a9a"/></linearGradient></defs><path d="M1 3 L6 1.800 L7 0.700 L16 0 L16 11 L1 14.500 Z" fill="#050505"/><path d="M1 4.300 L5.600 3.300 L6.800 4.500 L16 2.200 L16 11.200 L1 14.500 Z" fill="url(#fgb2)"/></svg><span class="tl" style="left:45px;top:28px;font-size:9.700px;color:#fff">Materials (21)</span>
<div class="tri-r" style="left:18px;top:50px"></div><svg style="left:34px;top:48px" width="17" height="15" viewBox="0 0 17 15"><defs><linearGradient id="fgb3" x1="0" y1="0" x2="1" y2="1"><stop offset="0" stop-color="#7796b0"/><stop offset="1" stop-color="#2f4a63"/></linearGradient></defs><path d="M1 3 L6 1.800 L7 0.700 L16 0 L16 11 L1 14.500 Z" fill="#050505"/><path d="M1 4.300 L5.600 3.300 L6.800 4.500 L16 2.200 L16 11.200 L1 14.500 Z" fill="url(#fgb3)"/></svg><span class="tl" style="left:55px;top:50px;font-size:9.700px">Pro_Shaders</span>
</div>
<div class="sb" style="left:802px;top:544px;height:170px"><div class="sbb up" style="top:0"></div><div class="sbt" style="top:18px;height:135px"></div><div class="grip" style="top:81px"></div><div class="sbb dn" style="top:153px"></div></div>
<div class="sb" style="left:1258px;top:544px;height:170px"><div class="sbb up" style="top:0"></div><div class="sbt" style="top:65px;height:47px"></div><div class="grip" style="top:84px"></div><div class="sbb dn" style="top:153px"></div></div>
<svg width="0" height="0"><defs>
<linearGradient id="tbg" x1="0" y1="0" x2="0" y2="1"><stop offset="0" stop-color="#c4c4c4"/><stop offset=".58" stop-color="#8e8e8e"/><stop offset=".66" stop-color="#7f7f7f"/><stop offset=".71" stop-color="#8e8e8e"/><stop offset="1" stop-color="#adadad"/></linearGradient>
<radialGradient id="tvg" cx=".25" cy=".1" r="1.05"><stop offset="0" stop-color="#fff" stop-opacity=".22"/><stop offset=".5" stop-color="#888" stop-opacity="0"/><stop offset="1" stop-color="#000" stop-opacity=".22"/></radialGradient>
<radialGradient id="tsh" cx=".5" cy=".5" r=".5"><stop offset="0" stop-color="#3a3a3a" stop-opacity=".75"/><stop offset=".6" stop-color="#444" stop-opacity=".45"/><stop offset="1" stop-color="#555" stop-opacity="0"/></radialGradient>
<radialGradient id="thl" cx=".5" cy=".5" r=".5"><stop offset="0" stop-color="#fff" stop-opacity=".95"/><stop offset="1" stop-color="#fff" stop-opacity="0"/></radialGradient>
<clipPath id="tcl"><circle cx="31" cy="32" r="26"/></clipPath>
</defs></svg>
<div style="left:827px;top:544px;width:431px;height:170px;overflow:hidden">
<svg style="left:21px;top:-56px" width="62" height="64" viewBox="0 0 62 64"><rect width="62" height="64" fill="url(#tbg)"/><rect width="62" height="64" fill="url(#tvg)"/><ellipse cx="39" cy="55.500" rx="25" ry="5.500" fill="url(#tsh)"/><defs><radialGradient id="sga0" cx="0.4" cy="0.3" r="0.8"><stop offset="0" stop-color="#f0f0f0"/><stop offset="0.6" stop-color="#b8b8b8"/><stop offset="1" stop-color="#7a7a7a"/></radialGradient></defs><circle cx="31" cy="32" r="26" fill="url(#sga0)"/><g clip-path="url(#tcl)"><ellipse cx="31" cy="58" rx="14" ry="3" fill="#e8e8e8" opacity=".8"/></g></svg>
<span class="glab mlab" style="left:21px;top:15px">Glass</span>
<svg style="left:103px;top:-56px" width="62" height="64" viewBox="0 0 62 64"><rect width="62" height="64" fill="url(#tbg)"/><rect width="62" height="64" fill="url(#tvg)"/><ellipse cx="39" cy="55.500" rx="25" ry="5.500" fill="url(#tsh)"/><defs><radialGradient id="sga1" cx="0.4" cy="0.3" r="0.8"><stop offset="0" stop-color="#e8f2ff"/><stop offset="0.6" stop-color="#9ab8dd"/><stop offset="1" stop-color="#5a7aa8"/></radialGradient></defs><circle cx="31" cy="32" r="26" fill="url(#sga1)"/><g clip-path="url(#tcl)"><ellipse cx="31" cy="58" rx="14" ry="3" fill="#f4f8ff" opacity=".8"/></g></svg>
<span class="glab mlab" style="left:103px;top:15px">Glass_Blue</span>
<svg style="left:185px;top:-56px" width="62" height="64" viewBox="0 0 62 64"><rect width="62" height="64" fill="url(#tbg)"/><rect width="62" height="64" fill="url(#tvg)"/><ellipse cx="39" cy="55.500" rx="25" ry="5.500" fill="url(#tsh)"/><defs><radialGradient id="sga2" cx="0.4" cy="0.3" r="0.8"><stop offset="0" stop-color="#e8fff8"/><stop offset="0.6" stop-color="#9ad0c0"/><stop offset="1" stop-color="#4a9a88"/></radialGradient></defs><circle cx="31" cy="32" r="26" fill="url(#sga2)"/><g clip-path="url(#tcl)"><ellipse cx="31" cy="58" rx="14" ry="3" fill="#9fe8d8" opacity=".8"/></g></svg>
<span class="glab mlab" style="left:185px;top:15px">Glass_Tint</span>
<svg style="left:267px;top:-56px" width="62" height="64" viewBox="0 0 62 64"><rect width="62" height="64" fill="url(#tbg)"/><rect width="62" height="64" fill="url(#tvg)"/><ellipse cx="39" cy="55.500" rx="25" ry="5.500" fill="url(#tsh)"/><defs><radialGradient id="sga3" cx="0.4" cy="0.3" r="0.8"><stop offset="0" stop-color="#fff"/><stop offset="0.6" stop-color="#ccc"/><stop offset="1" stop-color="#999"/></radialGradient></defs><circle cx="31" cy="32" r="26" fill="url(#sga3)"/><g clip-path="url(#tcl)"><ellipse cx="31" cy="58" rx="14" ry="3" fill="#f0f0f0" opacity=".8"/></g></svg>
<span class="glab mlab" style="left:267px;top:15px">Glow_Glass</span>
<svg style="left:349px;top:-56px" width="62" height="64" viewBox="0 0 62 64"><rect width="62" height="64" fill="url(#tbg)"/><rect width="62" height="64" fill="url(#tvg)"/><ellipse cx="39" cy="55.500" rx="25" ry="5.500" fill="url(#tsh)"/><defs><radialGradient id="sga4" cx="0.4" cy="0.3" r="0.8"><stop offset="0" stop-color="#ddd"/><stop offset="0.6" stop-color="#aaa"/><stop offset="1" stop-color="#777"/></radialGradient></defs><circle cx="31" cy="32" r="26" fill="url(#sga4)"/><g clip-path="url(#tcl)"><ellipse cx="31" cy="58" rx="14" ry="3" fill="#8a8a8a" opacity=".8"/></g></svg>
<span class="glab mlab" style="left:349px;top:15px">Gold_Basic</span>
<svg style="left:21px;top:38px" width="62" height="64" viewBox="0 0 62 64"><rect width="62" height="64" fill="url(#tbg)"/><rect width="62" height="64" fill="url(#tvg)"/><ellipse cx="39" cy="55.500" rx="25" ry="5.500" fill="url(#tsh)"/><defs><radialGradient id="sgb0" cx="0.35" cy="0.25" r="0.75"><stop offset="0" stop-color="#ffd2b4"/><stop offset="0.3" stop-color="#ffb088"/><stop offset="0.7" stop-color="#ff9a68"/><stop offset="1" stop-color="#ffc0a0"/></radialGradient></defs><circle cx="31" cy="32" r="26" fill="url(#sgb0)"/><g clip-path="url(#tcl)"><rect x="0" y="33" width="62" height="40" fill="#f4814c" opacity=".55"/><path d="M5 33 Q6 24 11 17" stroke="#fff" stroke-width="1.600" fill="none" opacity=".7"/><path d="M57 33 Q56 24 51 17" stroke="#fff" stroke-width="1.600" fill="none" opacity=".7"/><ellipse cx="22" cy="20" rx="9" ry="6" fill="url(#thl)" opacity="0.35" transform="rotate(-30 22 20)"/></g></svg>
<span class="glab mlab" style="left:21px;top:109px">Illuminated</span>
<svg style="left:103px;top:38px" width="62" height="64" viewBox="0 0 62 64"><rect width="62" height="64" fill="url(#tbg)"/><rect width="62" height="64" fill="url(#tvg)"/><ellipse cx="39" cy="55.500" rx="25" ry="5.500" fill="url(#tsh)"/><defs><radialGradient id="sgb1" cx="0.38" cy="0.28" r="0.8"><stop offset="0" stop-color="#bcbcbc"/><stop offset="0.4" stop-color="#8c8c8c"/><stop offset="0.8" stop-color="#565656"/><stop offset="1" stop-color="#484848"/></radialGradient></defs><circle cx="31" cy="32" r="26" fill="url(#sgb1)"/><g clip-path="url(#tcl)"></g></svg>
<span class="glab mlab" style="left:103px;top:109px">Matte_Shadow</span>
<svg style="left:185px;top:38px" width="62" height="64" viewBox="0 0 62 64"><rect width="62" height="64" fill="url(#tbg)"/><rect width="62" height="64" fill="url(#tvg)"/><ellipse cx="39" cy="55.500" rx="25" ry="5.500" fill="url(#tsh)"/><defs><radialGradient id="sgb2" cx="0.5" cy="0.5" r="0.5"><stop offset="0" stop-color="#000"/><stop offset="0.8" stop-color="#000"/><stop offset="0.9" stop-color="#08283a"/><stop offset="0.97" stop-color="#2488b8"/><stop offset="1" stop-color="#48bce6"/></radialGradient></defs><circle cx="31" cy="32" r="26" fill="url(#sgb2)"/><g clip-path="url(#tcl)"><circle cx="31" cy="32" r="25.600" fill="none" stroke="#48b8e4" stroke-width=".9" opacity=".85"/><ellipse cx="22" cy="21" rx="6.5" ry="4" fill="url(#thl)" opacity="0.5" transform="rotate(-30 22 21)"/></g></svg>
<span class="glab mlab" style="left:185px;top:109px">Outside_Glow</span>
<svg style="left:267px;top:38px" width="62" height="64" viewBox="0 0 62 64"><rect width="62" height="64" fill="url(#tbg)"/><rect width="62" height="64" fill="url(#tvg)"/><ellipse cx="39" cy="55.500" rx="25" ry="5.500" fill="url(#tsh)"/><defs><radialGradient id="sgb3" cx="0.4" cy="0.25" r="0.8"><stop offset="0" stop-color="#5a9cd4"/><stop offset="0.35" stop-color="#2c70b0"/><stop offset="0.8" stop-color="#1f5c94"/><stop offset="1" stop-color="#3a84c4"/></radialGradient></defs><circle cx="31" cy="32" r="26" fill="url(#sgb3)"/><g clip-path="url(#tcl)"><path d="M0 31 L8 30.500 L12 31 L17 30 L22 30.800 L27 30 L33 30.600 L38 29.800 L42 30.500 L45 28.500 L47 30.500 L50 29 L53 30.800 L62 31 L62 64 L0 64 Z" fill="#154a86" opacity=".62"/><path d="M0 40 L62 40 L62 64 L0 64Z" fill="#1d62a4" opacity=".45"/><ellipse cx="23" cy="21" rx="3.2" ry="2.2" fill="url(#thl)" opacity="1" transform="rotate(-30 23 21)"/><ellipse cx="23" cy="21" rx="2" ry="1.300" fill="#dff8ff" transform="rotate(-30 23 21)"/></g></svg>
<span class="glab mlab" style="left:267px;top:109px">Paint</span>
<svg style="left:349px;top:38px" width="62" height="64" viewBox="0 0 62 64"><rect width="62" height="64" fill="url(#tbg)"/><rect width="62" height="64" fill="url(#tvg)"/><ellipse cx="39" cy="55.500" rx="25" ry="5.500" fill="url(#tsh)"/><defs><radialGradient id="sgb4" cx="0.36" cy="0.28" r="0.8"><stop offset="0" stop-color="#e4e4e4"/><stop offset="0.4" stop-color="#c2c2c2"/><stop offset="0.8" stop-color="#949494"/><stop offset="1" stop-color="#8a8a8a"/></radialGradient></defs><circle cx="31" cy="32" r="26" fill="url(#sgb4)"/><g clip-path="url(#tcl)"><ellipse cx="21" cy="20" rx="6" ry="3.5" fill="url(#thl)" opacity="0.55" transform="rotate(-30 21 20)"/></g></svg>
<span class="glab mlab" style="left:349px;top:109px">Plain</span>
<svg style="left:21px;top:132px" width="62" height="64" viewBox="0 0 62 64"><rect width="62" height="64" fill="url(#tbg)"/><rect width="62" height="64" fill="url(#tvg)"/><ellipse cx="39" cy="55.500" rx="25" ry="5.500" fill="url(#tsh)"/><defs><radialGradient id="sgc0" cx="0.4" cy="0.2" r="0.7"><stop offset="0" stop-color="#6a7a80"/><stop offset="0.3" stop-color="#2a3438"/><stop offset="0.7" stop-color="#0c1012"/><stop offset="1" stop-color="#1a2226"/></radialGradient></defs><circle cx="31" cy="32" r="26" fill="url(#sgc0)"/><g clip-path="url(#tcl)"><path d="M0 30 L10 29.500 L16 30.200 L24 29.400 L33 30 L41 29.300 L50 30 L62 29.600 L62 64 L0 64Z" fill="#020303" opacity=".85"/><path d="M5 31 Q31 36 57 31" stroke="#8a9aa0" stroke-width=".8" fill="none" opacity=".35"/><ellipse cx="19" cy="20" rx="2.6" ry="1.8" fill="url(#thl)" opacity="1" transform="rotate(-30 19 20)"/></g></svg>
<svg style="left:103px;top:132px" width="62" height="64" viewBox="0 0 62 64"><rect width="62" height="64" fill="url(#tbg)"/><rect width="62" height="64" fill="url(#tvg)"/><ellipse cx="39" cy="55.500" rx="25" ry="5.500" fill="url(#tsh)"/><defs><radialGradient id="sgc1" cx="0.5" cy="0.6" r="0.62"><stop offset="0" stop-color="#f4fcff"/><stop offset="0.22" stop-color="#a8dcff"/><stop offset="0.5" stop-color="#74b4ec"/><stop offset="0.8" stop-color="#5a8ec4"/><stop offset="1" stop-color="#3c6088"/></radialGradient></defs><circle cx="31" cy="32" r="26" fill="url(#sgc1)"/><g clip-path="url(#tcl)"><path d="M0 33 L62 33 L62 64 L0 64Z" fill="#0e2c58" opacity=".45"/><ellipse cx="31" cy="36" rx="19" ry="6" fill="url(#thl)" opacity=".8"/><path d="M4 32.500 L58 32.500" stroke="#0a1a30" stroke-width="1.200" opacity=".55"/></g></svg>
<svg style="left:185px;top:132px" width="62" height="64" viewBox="0 0 62 64"><rect width="62" height="64" fill="url(#tbg)"/><rect width="62" height="64" fill="url(#tvg)"/><ellipse cx="39" cy="55.500" rx="25" ry="5.500" fill="url(#tsh)"/><defs><radialGradient id="sgc2" cx="0.38" cy="0.28" r="0.8"><stop offset="0" stop-color="#cfe0e6"/><stop offset="0.4" stop-color="#9cbcc8"/><stop offset="0.8" stop-color="#6f93a2"/><stop offset="1" stop-color="#5c7f8e"/></radialGradient></defs><circle cx="31" cy="32" r="26" fill="url(#sgc2)"/><g clip-path="url(#tcl)"><ellipse cx="22" cy="19" rx="7" ry="4" fill="url(#thl)" opacity="0.45" transform="rotate(-30 22 19)"/></g></svg>
<svg style="left:267px;top:132px" width="62" height="64" viewBox="0 0 62 64"><rect width="62" height="64" fill="url(#tbg)"/><rect width="62" height="64" fill="url(#tvg)"/><ellipse cx="39" cy="55.500" rx="25" ry="5.500" fill="url(#tsh)"/><defs><radialGradient id="sgc3" cx="0.5" cy="0.5" r="0.6"><stop offset="0" stop-color="#6cf0b0"/><stop offset="0.3" stop-color="#28c884"/><stop offset="0.6" stop-color="#1e98a0"/><stop offset="1" stop-color="#2468b8"/></radialGradient></defs><circle cx="31" cy="32" r="26" fill="url(#sgc3)"/><g clip-path="url(#tcl)"><path d="M0 32 L62 32 L62 64 L0 64Z" fill="#1c50c0" opacity=".55"/><ellipse cx="22" cy="18" rx="4" ry="2.5" fill="url(#thl)" opacity="0.9" transform="rotate(-30 22 18)"/></g></svg>
<svg style="left:349px;top:132px" width="62" height="64" viewBox="0 0 62 64"><rect width="62" height="64" fill="url(#tbg)"/><rect width="62" height="64" fill="url(#tvg)"/><ellipse cx="39" cy="55.500" rx="25" ry="5.500" fill="url(#tsh)"/><defs><radialGradient id="sgc4" cx="0.4" cy="0.22" r="0.8"><stop offset="0" stop-color="#e87058"/><stop offset="0.3" stop-color="#c42820"/><stop offset="0.7" stop-color="#a01414"/><stop offset="1" stop-color="#c83c28"/></radialGradient></defs><circle cx="31" cy="32" r="26" fill="url(#sgc4)"/><g clip-path="url(#tcl)"><path d="M0 33 L62 33 L62 64 L0 64Z" fill="#e8741c" opacity=".6"/><path d="M44 33 l2 -3 l1.500 3 l2 -4 l1.500 4 l2 -2 l2 2Z" fill="#7a0c0c" opacity=".7"/><ellipse cx="20" cy="19" rx="3" ry="2" fill="url(#thl)" opacity="1" transform="rotate(-30 20 19)"/></g></svg>
</div>
</body>
</html>
